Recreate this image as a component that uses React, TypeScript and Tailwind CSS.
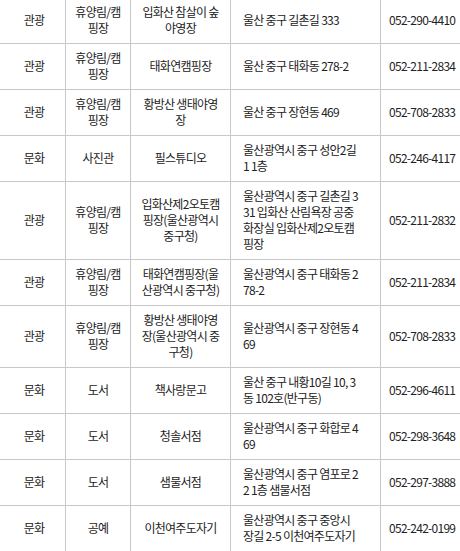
import { FC } from "react";

type Row = {
  kind: string;
  category: string[];
  name: string[];
  address: string[];
  phone: string;
};

const rows: Row[] = [
  { kind: "관광", category: ["휴양림/캠", "핑장"], name: ["입화산 참살이 숲", "야영장"], address: ["울산 중구 길촌길 333"], phone: "052-290-4410" },
  { kind: "관광", category: ["휴양림/캠", "핑장"], name: ["태화연캠핑장"], address: ["울산 중구 태화동 278-2"], phone: "052-211-2834" },
  { kind: "관광", category: ["휴양림/캠", "핑장"], name: ["황방산 생태야영", "장"], address: ["울산 중구 장현동 469"], phone: "052-708-2833" },
  { kind: "문화", category: ["사진관"], name: ["필스튜디오"], address: ["울산광역시 중구 성안2길", "1 1층"], phone: "052-246-4117" },
  {
    kind: "관광",
    category: ["휴양림/캠", "핑장"],
    name: ["입화산제2오토캠", "핑장(울산광역시", "중구청)"],
    address: ["울산광역시 중구 길촌길 3", "31 입화산 산림욕장 공중", "화장실 입화산제2오토캠", "핑장"],
    phone: "052-211-2832",
  },
  { kind: "관광", category: ["휴양림/캠", "핑장"], name: ["태화연캠핑장(울", "산광역시 중구청)"], address: ["울산광역시 중구 태화동 2", "78-2"], phone: "052-211-2834" },
  { kind: "관광", category: ["휴양림/캠", "핑장"], name: ["황방산 생태야영", "장(울산광역시 중", "구청)"], address: ["울산광역시 중구 장현동 4", "69"], phone: "052-708-2833" },
  { kind: "문화", category: ["도서"], name: ["책사랑문고"], address: ["울산 중구 내황10길 10, 3", "동 102호(반구동)"], phone: "052-296-4611" },
  { kind: "문화", category: ["도서"], name: ["청솔서점"], address: ["울산광역시 중구 화합로 4", "69"], phone: "052-298-3648" },
  { kind: "문화", category: ["도서"], name: ["샘물서점"], address: ["울산광역시 중구 염포로 2", "2 1층 샘물서점"], phone: "052-297-3888" },
  { kind: "문화", category: ["공예"], name: ["이천여주도자기"], address: ["울산광역시 중구 중앙시", "장길 2-5 이천여주도자기"], phone: "052-242-0199" },
];

const Lines: FC<{ lines: string[] }> = ({ lines }) => (
  <div>
    {lines.map((l, i) => (
      <div key={i}>{l}</div>
    ))}
  </div>
);

const cell = "flex items-center border-b border-r border-[#c8c8c8] pt-[6px] pb-[7px] whitespace-nowrap";

export default function App() {
  return (
    <div className="w-[460px] h-[551px] overflow-hidden bg-white">
      <div
        className="-mt-[2px] grid grid-cols-[66px_65px_100px_150px_100px] text-[12px] leading-[16px] tracking-[-0.06em] text-[#222]"
        style={{ fontFamily: '"Noto Sans CJK KR", "Noto Sans", sans-serif' }}
      >
        {rows.map((r, i) => (
          <div key={i} className="contents">
            <div className={`${cell} justify-center pl-[3px]`}>{r.kind}</div>
            <div className={`${cell} justify-center text-center`}>
              <Lines lines={r.category} />
            </div>
            <div className={`${cell} justify-center text-center`}>
              <Lines lines={r.name} />
            </div>
            <div className={`${cell} pl-[12px]`}>
              <Lines lines={r.address} />
            </div>
            <div className={`${cell} pl-[8px]`}>{r.phone}</div>
          </div>
        ))}
      </div>
    </div>
  );
}
